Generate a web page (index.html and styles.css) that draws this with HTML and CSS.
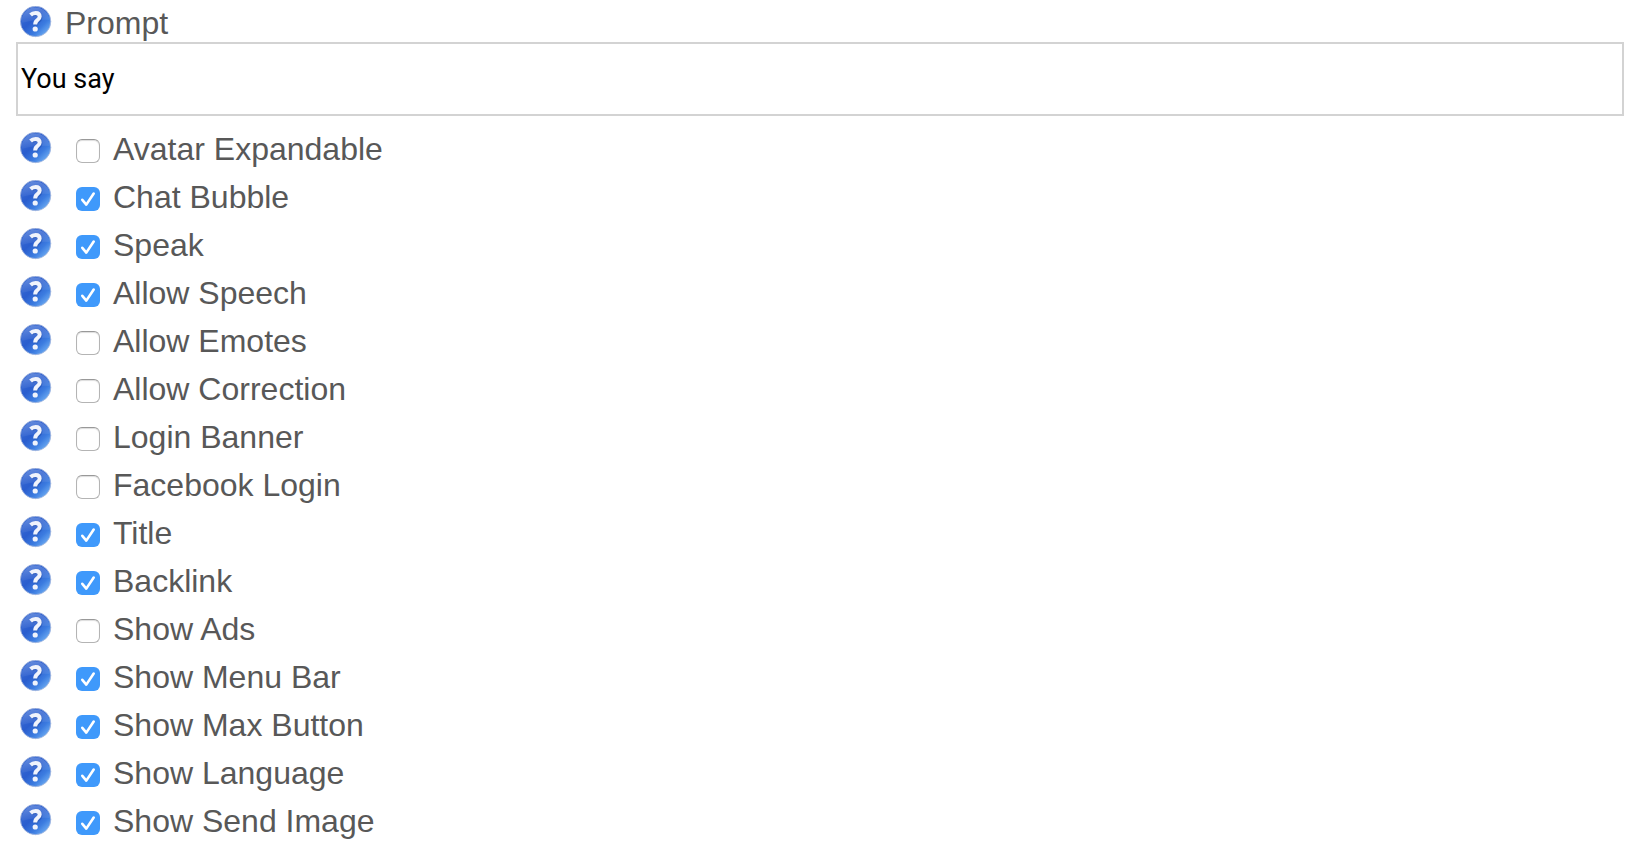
FILE: index.html
```html
<!DOCTYPE html>
<html lang="en">
<head>
<meta charset="utf-8">
<title>Embed options</title>
<link rel="stylesheet" href="styles.css">
</head>
<body>
<svg class="defs" width="0" height="0" aria-hidden="true">
  <defs>
    <linearGradient id="ball" x1="0.1" y1="0.1" x2="0.9" y2="0.95">
      <stop offset="0" stop-color="#3a6cd4"/>
      <stop offset="0.4" stop-color="#2a5dce"/>
      <stop offset="0.7" stop-color="#3c7ce0"/>
      <stop offset="1" stop-color="#78b6f6"/>
    </linearGradient>
    <linearGradient id="gloss" x1="0" y1="0" x2="0" y2="1">
      <stop offset="0" stop-color="#fff" stop-opacity="0.22"/>
      <stop offset="1" stop-color="#fff" stop-opacity="0.04"/>
    </linearGradient>
    <symbol id="help" viewBox="0 0 32 32">
      <circle cx="15.6" cy="15.5" r="15.2" fill="url(#ball)" stroke="#a9b9dc" stroke-width="0.8"/>
      <path d="M1.6 17A14 14 0 0 1 29.6 14Q17 13 1.6 17Z" fill="url(#gloss)"/>
      <path d="M10.8 8.8Q12.8 7 15.6 7Q19.7 7 19.7 10.6Q19.7 12.6 17.4 14.1Q15.2 15.6 15.2 18.6" fill="none" stroke="#1c459f" stroke-opacity="0.4" stroke-width="4.2" transform="translate(0.6 0.8)"/>
      <path d="M10.6 9Q12.6 7 15.6 7Q19.7 7 19.7 10.6Q19.7 12.6 17.4 14.1Q15.2 15.6 15.2 18.6" fill="none" stroke="#f0f3fc" stroke-width="4"/>
      <circle cx="15.2" cy="23" r="2.6" fill="#f0f3fc"/>
    </symbol>
  </defs>
</svg>
<form class="options">
  <div class="row prompt-row">
    <a class="help" href="#prompt" aria-label="Help"><svg><use href="#help"/></svg></a>
    <label class="prompt-label" for="prompt">Prompt</label>
  </div>
  <input class="prompt" id="prompt" type="text" value="You say">
  <div class="row"><a class="help" href="#avatar" aria-label="Help"><svg><use href="#help"/></svg></a><input class="check" id="avatar" type="checkbox"><label for="avatar">Avatar Expandable</label></div>
  <div class="row"><a class="help" href="#bubble" aria-label="Help"><svg><use href="#help"/></svg></a><input class="check" id="bubble" type="checkbox" checked><label for="bubble">Chat Bubble</label></div>
  <div class="row"><a class="help" href="#speak" aria-label="Help"><svg><use href="#help"/></svg></a><input class="check" id="speak" type="checkbox" checked><label for="speak">Speak</label></div>
  <div class="row"><a class="help" href="#speech" aria-label="Help"><svg><use href="#help"/></svg></a><input class="check" id="speech" type="checkbox" checked><label for="speech">Allow Speech</label></div>
  <div class="row"><a class="help" href="#emotes" aria-label="Help"><svg><use href="#help"/></svg></a><input class="check" id="emotes" type="checkbox"><label for="emotes">Allow Emotes</label></div>
  <div class="row"><a class="help" href="#correction" aria-label="Help"><svg><use href="#help"/></svg></a><input class="check" id="correction" type="checkbox"><label for="correction">Allow Correction</label></div>
  <div class="row"><a class="help" href="#banner" aria-label="Help"><svg><use href="#help"/></svg></a><input class="check" id="banner" type="checkbox"><label for="banner">Login Banner</label></div>
  <div class="row"><a class="help" href="#facebook" aria-label="Help"><svg><use href="#help"/></svg></a><input class="check" id="facebook" type="checkbox"><label for="facebook">Facebook Login</label></div>
  <div class="row"><a class="help" href="#title" aria-label="Help"><svg><use href="#help"/></svg></a><input class="check" id="title" type="checkbox" checked><label for="title">Title</label></div>
  <div class="row"><a class="help" href="#backlink" aria-label="Help"><svg><use href="#help"/></svg></a><input class="check" id="backlink" type="checkbox" checked><label for="backlink">Backlink</label></div>
  <div class="row"><a class="help" href="#ads" aria-label="Help"><svg><use href="#help"/></svg></a><input class="check" id="ads" type="checkbox"><label for="ads">Show Ads</label></div>
  <div class="row"><a class="help" href="#menubar" aria-label="Help"><svg><use href="#help"/></svg></a><input class="check" id="menubar" type="checkbox" checked><label for="menubar">Show Menu Bar</label></div>
  <div class="row"><a class="help" href="#max" aria-label="Help"><svg><use href="#help"/></svg></a><input class="check" id="max" type="checkbox" checked><label for="max">Show Max Button</label></div>
  <div class="row"><a class="help" href="#language" aria-label="Help"><svg><use href="#help"/></svg></a><input class="check" id="language" type="checkbox" checked><label for="language">Show Language</label></div>
  <div class="row"><a class="help" href="#image" aria-label="Help"><svg><use href="#help"/></svg></a><input class="check" id="image" type="checkbox" checked><label for="image">Show Send Image</label></div>
</form>
</body>
</html>
```
FILE: styles.css
```css
* { box-sizing: border-box; }

body {
  margin: 0;
  background: #fff;
  color: #585858;
  font-family: "Liberation Sans", Arial, sans-serif;
  font-size: 32px;
  line-height: 34px;
}

.defs { display: block; }

.options { padding: 0 16px; }

.row {
  display: flex;
  align-items: flex-start;
  padding: 6px 4px 8px;
}

.prompt-row { padding-bottom: 2px; }

.help {
  width: 32px;
  height: 32px;
}

.help svg {
  display: block;
  width: 100%;
  height: 100%;
}

.prompt-label { margin-left: 13px; }

.prompt {
  display: block;
  width: 100%;
  height: 74px;
  margin: 0 0 10px;
  padding: 0 3px;
  border: 2px solid #d3d3d3;
  background: #fff;
  color: #000;
  font: 27px Roboto, sans-serif;
}

.check {
  appearance: none;
  width: 24px;
  height: 24px;
  margin: 7px 13px 0 24px;
  border: 1px solid #b4b4b4;
  border-top-color: #999;
  border-radius: 6px;
  background: #fff;
  box-shadow: inset 0 1px 1px #ddd;
}

.check:checked {
  border: 0;
  background: #3f99fb url("data:image/svg+xml,%3Csvg xmlns='http://www.w3.org/2000/svg' viewBox='0 0 24 24'%3E%3Cpath d='M6.3 12.8L10.3 17.6L17.7 6.5' fill='none' stroke='white' stroke-width='2.6' stroke-linecap='round' stroke-linejoin='round'/%3E%3C/svg%3E") center / 100% no-repeat;
  box-shadow: none;
}
```
